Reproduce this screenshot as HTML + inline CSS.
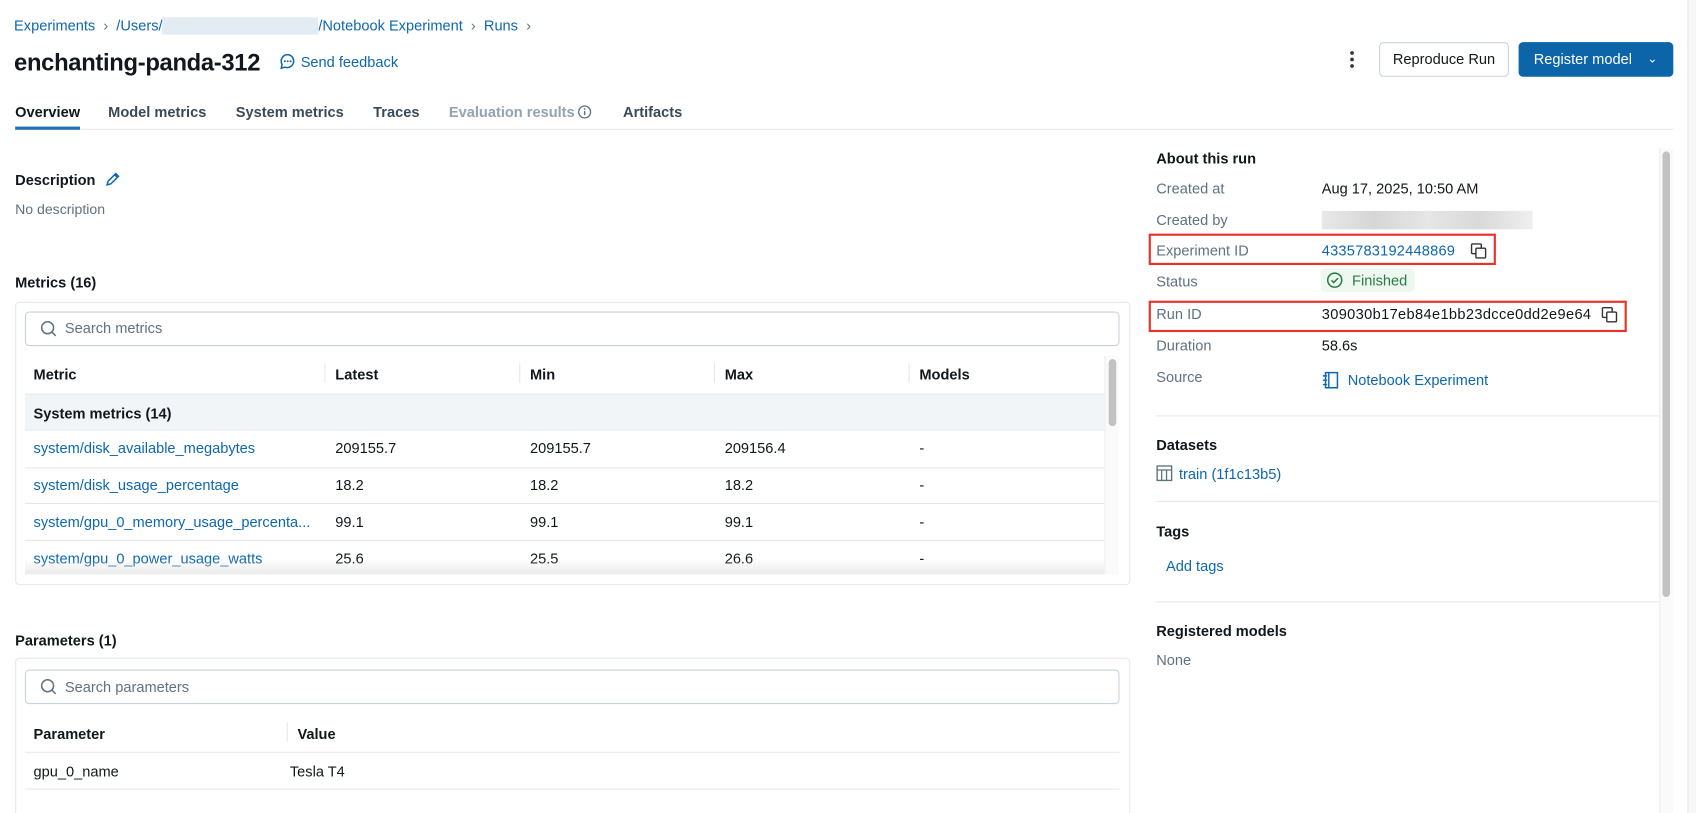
<!DOCTYPE html>
<html><head><meta charset="utf-8">
<style>
*{box-sizing:border-box;margin:0;padding:0}
html,body{width:1696px;height:813px;overflow:hidden;background:#fff}
#w{position:absolute;left:0;top:0;width:1568px;height:752px;overflow:hidden;transform:scale(1.08163);transform-origin:0 0;font-family:"Liberation Sans",sans-serif;font-size:13.5px;color:#11171c}
.a{position:absolute;white-space:nowrap}
div.a{margin-top:1px}
.lk{color:#0e67b0}
.b{font-weight:bold}
.g{color:#5f7281}
.hl{position:absolute;height:1px;background:#e4e8eb}
.red{position:absolute;border:2.5px solid #e8322b}
.card{position:absolute;border:1px solid #e4e8eb;border-radius:4px}
.search{position:absolute;border:1px solid #c9d1d8;border-radius:4px}
.vs{position:absolute;width:1px;height:18px;background:#e4e8eb}
</style></head><body><div id="w">
<div class="a lk" style="left:13px;top:15px;font-size:13.5px">Experiments <span style="color:#5f7281">&nbsp;›&nbsp;</span> /Users/<span style="display:inline-block;width:144px;height:16px;background:#e3ecf3;vertical-align:middle"></span>/Notebook Experiment <span style="color:#5f7281">&nbsp;›&nbsp;</span> Runs <span style="color:#5f7281">&nbsp;›</span></div>
<div class="a b" style="left:13px;top:44px;font-size:22px;letter-spacing:-0.3px">enchanting-panda-312</div>
<svg class="a" style="left:258px;top:49px" width="16" height="16" viewBox="0 0 16 16"><path d="M8 1.5a6 6 0 0 0-5.2 9L2 14l3.4-.9A6 6 0 1 0 8 1.5z" fill="none" stroke="#0e67b0" stroke-width="1.4"/><circle cx="5.3" cy="7.6" r=".9" fill="#0e67b0"/><circle cx="8" cy="7.6" r=".9" fill="#0e67b0"/><circle cx="10.7" cy="7.6" r=".9" fill="#0e67b0"/></svg>
<div class="a lk" style="left:278px;top:49px">Send feedback</div>
<svg class="a" style="left:1246px;top:46px" width="8" height="18"><circle cx="4" cy="3" r="1.7" fill="#333"/><circle cx="4" cy="9" r="1.7" fill="#333"/><circle cx="4" cy="15" r="1.7" fill="#333"/></svg>
<div class="a" style="left:1275px;top:38px;width:120px;height:32px;border:1px solid #c9d1d8;border-radius:4px;text-align:center;line-height:30px">Reproduce Run</div>
<div class="a" style="left:1404px;top:38px;width:143px;height:32px;background:#0b65a8;border-radius:4px;color:#fff;line-height:32px;padding-left:14px">Register model <span style="position:absolute;left:119px;top:0;font-size:11px">&#8964;</span></div>
<div class="a b" style="left:14px;top:95px">Overview</div>
<div class="a b" style="left:100px;top:95px;color:#3a4a57">Model metrics</div>
<div class="a b" style="left:218px;top:95px;color:#3a4a57">System metrics</div>
<div class="a b" style="left:345px;top:95px;color:#3a4a57">Traces</div>
<div class="a b" style="left:415px;top:95px;color:#93a3b0">Evaluation results</div>
<svg class="a" style="left:534px;top:97px" width="13" height="13"><circle cx="6.5" cy="6.5" r="5.5" fill="none" stroke="#5f7281" stroke-width="1.2"/><rect x="5.9" y="5.5" width="1.3" height="4" fill="#5f7281"/><circle cx="6.5" cy="3.8" r=".8" fill="#5f7281"/></svg>
<div class="a b" style="left:576px;top:95px;color:#3a4a57">Artifacts</div>
<div class="hl" style="left:14px;top:119px;width:1533px"></div>
<div class="a" style="left:14px;top:116px;width:60px;height:3px;background:#2272b4"></div>

<div class="a b" style="left:14px;top:158px">Description</div>
<svg class="a" style="left:96px;top:158px" width="16" height="16" viewBox="0 0 16 16"><path d="M3 13l1-3.5L11 2.5l2.5 2.5-7 7zM10 3.5l2.5 2.5" fill="none" stroke="#0e67b0" stroke-width="1.4"/></svg>
<div class="a g" style="left:14px;top:185px;font-size:13px">No description</div>
<div class="a b" style="left:14px;top:253px">Metrics (16)</div>
<div class="card" style="left:14px;top:279px;width:1031px;height:262px"></div>
<div class="search" style="left:23px;top:288px;width:1012px;height:32px"></div>
<svg class="a" style="left:37px;top:296px" width="16" height="16"><circle cx="7" cy="7" r="5.5" fill="none" stroke="#5f7281" stroke-width="1.4"/><path d="M11 11l3.5 3.5" stroke="#5f7281" stroke-width="1.4"/></svg>
<div class="a g" style="left:60px;top:295px">Search metrics</div>
<div class="a b" style="left:31px;top:338px">Metric</div>
<div class="vs" style="left:300px;top:336px"></div><div class="a b" style="left:310px;top:338px">Latest</div>
<div class="vs" style="left:480px;top:336px"></div><div class="a b" style="left:490px;top:338px">Min</div>
<div class="vs" style="left:660px;top:336px"></div><div class="a b" style="left:670px;top:338px">Max</div>
<div class="vs" style="left:840px;top:336px"></div><div class="a b" style="left:850px;top:338px">Models</div>
<div class="a" style="left:23px;top:364px;width:998px;height:34px;background:#f2f5f7;border-top:1px solid #e4e8eb;border-bottom:1px solid #e4e8eb;margin-top:0"></div>
<div class="a b" style="left:31px;top:374px">System metrics (14)</div>
<div class="a lk" style="left:31px;top:406px">system/disk_available_megabytes</div><div class="a" style="left:310px;top:406px">209155.7</div><div class="a" style="left:490px;top:406px">209155.7</div><div class="a" style="left:670px;top:406px">209156.4</div><div class="a" style="left:850px;top:406px">-</div>
<div class="hl" style="left:23px;top:432px;width:998px"></div>
<div class="a lk" style="left:31px;top:440px">system/disk_usage_percentage</div><div class="a" style="left:310px;top:440px">18.2</div><div class="a" style="left:490px;top:440px">18.2</div><div class="a" style="left:670px;top:440px">18.2</div><div class="a" style="left:850px;top:440px">-</div>
<div class="hl" style="left:23px;top:465px;width:998px"></div>
<div class="a lk" style="left:31px;top:474px">system/gpu_0_memory_usage_percenta...</div><div class="a" style="left:310px;top:474px">99.1</div><div class="a" style="left:490px;top:474px">99.1</div><div class="a" style="left:670px;top:474px">99.1</div><div class="a" style="left:850px;top:474px">-</div>
<div class="hl" style="left:23px;top:499px;width:998px"></div>
<div class="a lk" style="left:31px;top:508px">system/gpu_0_power_usage_watts</div><div class="a" style="left:310px;top:508px">25.6</div><div class="a" style="left:490px;top:508px">25.5</div><div class="a" style="left:670px;top:508px">26.6</div><div class="a" style="left:850px;top:508px">-</div>
<div class="a" style="left:23px;top:516px;width:998px;height:14px;background:linear-gradient(rgba(255,255,255,0),rgba(220,220,220,.6))"></div>
<div class="a" style="left:1021px;top:328px;width:13px;height:202px;background:#fafafa;border-left:1px solid #eee"></div>
<div class="a" style="left:1025px;top:331px;width:7px;height:62px;background:#c2c2c2;border-radius:4px"></div>

<div class="a b" style="left:14px;top:584px">Parameters (1)</div>
<div class="card" style="left:14px;top:608px;width:1031px;height:300px"></div>
<div class="search" style="left:23px;top:619px;width:1012px;height:32px"></div>
<svg class="a" style="left:37px;top:627px" width="16" height="16"><circle cx="7" cy="7" r="5.5" fill="none" stroke="#5f7281" stroke-width="1.4"/><path d="M11 11l3.5 3.5" stroke="#5f7281" stroke-width="1.4"/></svg>
<div class="a g" style="left:60px;top:627px">Search parameters</div>
<div class="a b" style="left:31px;top:670px">Parameter</div>
<div class="vs" style="left:265px;top:668px"></div><div class="a b" style="left:275px;top:670px">Value</div>
<div class="hl" style="left:23px;top:695px;width:1012px"></div>
<div class="a" style="left:31px;top:705px">gpu_0_name</div><div class="a" style="left:268px;top:705px">Tesla T4</div>
<div class="hl" style="left:23px;top:729px;width:1012px"></div>

<div class="a b" style="left:1069px;top:138px">About this run</div>
<div class="a g" style="left:1069px;top:166px">Created at</div><div class="a" style="left:1222px;top:166px">Aug 17, 2025, 10:50 AM</div>
<div class="a g" style="left:1069px;top:195px">Created by</div><div class="a" style="left:1222px;top:194px;width:195px;height:17px;background:linear-gradient(90deg,#e8e8e8,#d6d6d6,#e6e6e6,#d9d9d9,#efefef)"></div>
<div class="a g" style="left:1069px;top:223px">Experiment ID</div><div class="a lk" style="left:1222px;top:223px;letter-spacing:0.2px">4335783192448869</div>
<svg class="a" style="left:1359px;top:224px" width="16" height="16"><rect x="1.5" y="1.5" width="9" height="9" rx="1" fill="none" stroke="#333" stroke-width="1.3"/><rect x="5.5" y="5.5" width="9" height="9" rx="1" fill="#fff" stroke="#333" stroke-width="1.3"/></svg>
<div class="red" style="left:1062px;top:216px;width:321px;height:29px"></div>
<div class="a g" style="left:1069px;top:252px">Status</div>
<div class="a" style="left:1221px;top:247px;width:87px;height:22px;background:#eef7f0;border-radius:4px"></div>
<svg class="a" style="left:1226px;top:251px" width="16" height="16"><circle cx="8" cy="8" r="6.5" fill="none" stroke="#277c43" stroke-width="1.4"/><path d="M5 8.2l2 2 4-4" fill="none" stroke="#277c43" stroke-width="1.4"/></svg>
<div class="a" style="left:1250px;top:251px;color:#277c43">Finished</div>
<div class="a g" style="left:1069px;top:282px">Run ID</div><div class="a" style="left:1222px;top:282px;letter-spacing:0.33px">309030b17eb84e1bb23dcce0dd2e9e64</div>
<svg class="a" style="left:1480px;top:283px" width="16" height="16"><rect x="1.5" y="1.5" width="9" height="9" rx="1" fill="none" stroke="#333" stroke-width="1.3"/><rect x="5.5" y="5.5" width="9" height="9" rx="1" fill="#fff" stroke="#333" stroke-width="1.3"/></svg>
<div class="red" style="left:1062px;top:278px;width:442px;height:29px"></div>
<div class="a g" style="left:1069px;top:311px">Duration</div><div class="a" style="left:1222px;top:311px">58.6s</div>
<div class="a g" style="left:1069px;top:340px">Source</div>
<svg class="a" style="left:1222px;top:343px" width="16" height="17"><rect x="3.5" y="1.5" width="11" height="14" fill="none" stroke="#0e67b0" stroke-width="1.4"/><path d="M6.5 1.5v14M1 4.5h4M1 8.5h4M1 12.5h4" stroke="#0e67b0" stroke-width="1.3"/></svg>
<div class="a lk" style="left:1246px;top:343px">Notebook Experiment</div>
<div class="hl" style="left:1069px;top:384px;width:465px"></div>
<div class="a b" style="left:1069px;top:403px">Datasets</div>
<svg class="a" style="left:1069px;top:430px" width="15" height="15"><rect x=".8" y=".8" width="13.4" height="13.4" fill="none" stroke="#5f7281" stroke-width="1.3"/><path d="M.8 4.5h13.4M5 4.5v9.7M9.5 4.5v9.7" stroke="#5f7281" stroke-width="1.2"/></svg>
<div class="a lk" style="left:1090px;top:430px">train (1f1c13b5)</div>
<div class="hl" style="left:1069px;top:463px;width:465px"></div>
<div class="a b" style="left:1069px;top:483px">Tags</div>
<div class="a lk" style="left:1078px;top:515px">Add tags</div>
<div class="hl" style="left:1069px;top:556px;width:465px"></div>
<div class="a b" style="left:1069px;top:575px">Registered models</div>
<div class="a g" style="left:1069px;top:602px">None</div>
<div class="a" style="left:1534px;top:137px;width:13px;height:700px;background:#fafafa;border-left:1px solid #eee;margin-top:0"></div>
<div class="a" style="left:1537px;top:139px;width:7px;height:412px;background:#c2c2c2;border-radius:4px"></div>
<div class="a" style="left:1560px;top:0;width:8px;height:800px;background:#f7f7f7;border-left:1px solid #e8e8e8;margin-top:0"></div>
</div></body></html>
